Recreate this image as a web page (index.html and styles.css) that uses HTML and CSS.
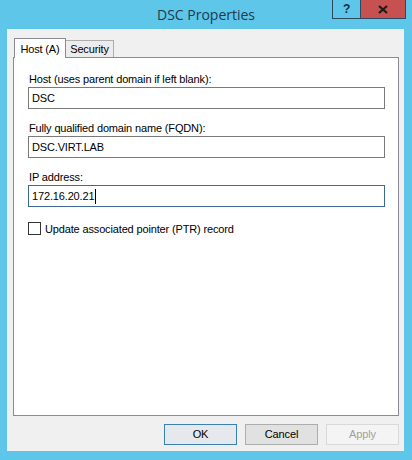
FILE: index.html
```html
<!DOCTYPE html>
<html lang="en">
<head>
    <meta charset="UTF-8">
    <meta name="viewport" content="width=device-width, initial-scale=1.0">
    <title>DSC Properties</title>
    <link rel="stylesheet" href="styles.css">
</head>
<body>
    <div class="window">
        <!-- Barra de título -->
        <div class="titlebar">
            <div></div>
            <div class="title">DSC Properties</div>
            <div class="controls">
                <div class="ctl help">?</div>
                <div class="ctl close">
                    <svg width="10" height="9" viewBox="0 0 10 9">
                        <path d="M1 1 L9 8 M9 1 L1 8" stroke="#1b1b1b" stroke-width="2.2"/>
                    </svg>
                </div>
            </div>
        </div>

        <!-- Área cliente -->
        <div class="client">
            <div class="tabs">
                <div class="tab active">Host (A)</div>
                <div class="tab">Security</div>
            </div>
            <div class="panel">
                <div class="field">
                    <label>Host (uses parent domain if left blank):</label>
                    <div class="input">DSC</div>
                </div>
                <div class="field">
                    <label>Fully qualified domain name (FQDN):</label>
                    <div class="input">DSC.VIRT.LAB</div>
                </div>
                <div class="field">
                    <label>IP address:</label>
                    <div class="input focused">172.16.20.21<span class="caret"></span></div>
                </div>
                <div class="check-row">
                    <span class="checkbox"></span>
                    <span>Update associated pointer (PTR) record</span>
                </div>
            </div>
            <div class="buttons">
                <div class="btn default">OK</div>
                <div class="btn">Cancel</div>
                <div class="btn disabled">Apply</div>
            </div>
        </div>
    </div>
</body>
</html>
```

FILE: styles.css
```css
/* Estilo general */
body {
    margin: 0;
    background-color: #5ec6e9;
    font-family: "Liberation Sans", Arial, sans-serif;
    font-size: 11px;
    letter-spacing: -0.15px;
    color: #000;
}
.window {
    width: 412px;
    height: 460px;
}

/* Barra de título */
.titlebar {
    height: 29px;
    display: grid;
    grid-template-columns: 1fr auto 1fr;
}
.title {
    font-family: "Open Sans", sans-serif;
    font-size: 14px;
    letter-spacing: 0;
    color: #1d3a4d;
    line-height: 30px;
}
.controls {
    display: flex;
    justify-content: flex-end;
    align-items: flex-start;
    padding-right: 6px;
}
.ctl {
    height: 19px;
    border: 1px solid #2a4a60;
    border-top: none;
    display: flex;
    align-items: center;
    justify-content: center;
    box-sizing: border-box;
}
.help {
    width: 28px;
    border-right: none;
    font-weight: bold;
    font-size: 12px;
    color: #14304a;
}
.close {
    width: 46px;
    background-color: #c75050;
}

/* Área cliente */
.client {
    margin-left: 7px;
    width: 397px;
    height: 422px;
    background-color: #f0f0f0;
    box-sizing: border-box;
    padding: 9px 5px 0 6px;
}
.tabs {
    display: flex;
    height: 19px;
    align-items: flex-end;
    padding-left: 1px;
}
.tab {
    height: 17px;
    border: 1px solid #adadad;
    border-bottom: none;
    background-color: #ececec;
    line-height: 17px;
    text-align: center;
    white-space: nowrap;
    box-sizing: border-box;
}
.tab + .tab {
    border-left: none;
    width: 48px;
}
.tab.active {
    height: 20px;
    width: 52px;
    background-color: #fff;
    line-height: 20px;
    margin-bottom: -1px;
    position: relative;
    z-index: 1;
    border-color: #898c95;
}
.panel {
    height: 359px;
    border: 1px solid #898c95;
    background-color: #fff;
    box-sizing: border-box;
    padding: 14px 13px 0 14px;
}
.field {
    margin-bottom: 12px;
}
.field label {
    display: block;
    height: 15px;
    line-height: 15px;
    padding-left: 1px;
    color: #000;
}
.input {
    height: 22px;
    border: 1px solid #7a7a7a;
    box-sizing: border-box;
    padding-left: 3px;
    display: flex;
    align-items: center;
}
.input.focused {
    border-color: #3d6a8f;
}
.caret {
    width: 1px;
    height: 15px;
    background-color: #000;
    margin-left: 1px;
}
.check-row {
    display: flex;
    align-items: center;
    gap: 4px;
    margin-top: 15px;
    height: 13px;
}
.checkbox {
    width: 13px;
    height: 13px;
    border: 1px solid #333;
    box-sizing: border-box;
    background-color: #fff;
}

/* Botones */
.buttons {
    display: flex;
    justify-content: flex-end;
    gap: 8px;
    margin-top: 8px;
}
.btn {
    width: 73px;
    height: 21px;
    border: 1px solid #adadad;
    background-color: #e1e1e1;
    box-sizing: border-box;
    text-align: center;
    line-height: 19px;
}
.btn.default {
    border-color: #3c7fb1;
    background-color: #e5e8ec;
}
.btn.disabled {
    border-color: #d9d9d9;
    background-color: #f4f4f4;
    color: #a0a0a0;
}
```
